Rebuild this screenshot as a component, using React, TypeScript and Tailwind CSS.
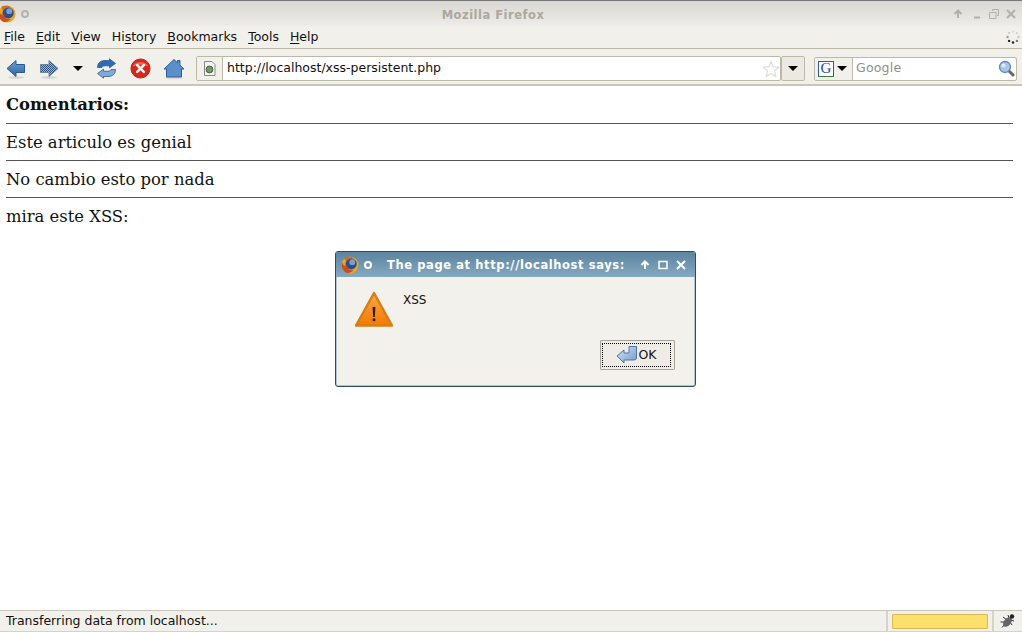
import React from "react";

const Fox = ({ size = 16 }: { size?: number }) => (
  <svg width={size} height={size} viewBox="0 0 16 16" className="shrink-0">
    <circle cx="8" cy="8" r="7.6" fill="#e8a526" />
    <circle cx="9" cy="7" r="5" fill="#2a4f8f" />
    <circle cx="10" cy="5.5" r="2.6" fill="#7f9ecb" />
    <path d="M1 5C1.500 9 4 9 6 8.500C5 11 7 13 11 12.500C9 15.500 4.500 16 2.500 13C.5 11 .2 8 1 5Z" fill="#c9501c" />
    <path d="M3 1.500C5 .5 9 .5 11 1.500C8 1.500 6 3 5 5C4 4 3 3 3 1.500Z" fill="#d86a1c" />
  </svg>
);

const Ring = ({ color }: { color: string }) => (
  <span className={`block h-[8px] w-[8px] shrink-0 rounded-full border-2 ${color}`} />
);

const BackIcon = ({ flip = false, checker = false }: { flip?: boolean; checker?: boolean }) => (
  <svg width="20" height="22" viewBox="0 0 20 22" className={`shrink-0 ${flip ? "-scale-x-100" : ""}`}>
    <defs>
      <linearGradient id="arrowFill" x1="0" y1="0" x2="0" y2="1">
        <stop offset="0" stopColor="#6f9fd0" />
        <stop offset="1" stopColor="#2d62a0" />
      </linearGradient>
      <pattern id="arrowCheck" width="2" height="2" patternUnits="userSpaceOnUse">
        <rect width="2" height="2" fill="#a4b6cc" />
        <rect width="1" height="1" fill="#2f4f7a" />
        <rect x="1" y="1" width="1" height="1" fill="#2f4f7a" />
      </pattern>
    </defs>
    <ellipse cx="10" cy="19.500" rx="8" ry="1.500" fill="#d8d6d0" />
    <path
      d="M1 10.500L10 2.500V6.500H18.500V14.500H10V18.500Z"
      fill={checker ? "url(#arrowCheck)" : "url(#arrowFill)"}
      stroke={checker ? "#6f84a0" : "#2a5a94"}
      strokeWidth="1"
      strokeLinejoin="round"
    />
  </svg>
);

const ReloadIcon = () => (
  <svg width="21" height="21" viewBox="0 0 21 21" className="shrink-0">
    <path d="M1.500 9.500C1.500 4.500 5 2.500 9 2.500H13.500V.8L19.500 5.500L13.500 9.800V7.800H9C7 7.800 6.200 8.500 6 9.500Z" fill="#2f6db0" stroke="#2a5a94" strokeWidth=".8" strokeLinejoin="round" />
    <path d="M19.500 11.500C19.500 16.500 16 18.500 12 18.500H7.500V20.200L1.500 15.500L7.500 11.200V13.200H12C14 13.200 14.800 12.500 15 11.500Z" fill="#7fa9d8" stroke="#2a5a94" strokeWidth=".8" strokeLinejoin="round" />
  </svg>
);

const StopIcon = () => (
  <svg width="21" height="21" viewBox="0 0 22 22" className="shrink-0">
    <circle cx="11" cy="11" r="10" fill="#d8261c" stroke="#b0271d" />
    <path d="M3 9C4 3 18 3 19 9C14 6.500 8 6.500 3 9Z" fill="#ee6a5e" />
    <path d="M7.500 7.500L14.500 14.500M14.500 7.500L7.500 14.500" stroke="#fff" strokeWidth="2.600" strokeLinecap="round" />
  </svg>
);

const HomeIcon = () => (
  <svg width="22" height="22" viewBox="0 0 22 22" className="shrink-0">
    <ellipse cx="11" cy="20" rx="9" ry="1.300" fill="#dedcd6" />
    <path d="M1 11L11 1.500L14.500 4.800V2.500H17V7.200L21 11L18.500 11V19H3.500V11Z" fill="#5a8fca" stroke="#2f5f98" strokeLinejoin="round" />
  </svg>
);

const PageIcon = () => (
  <svg width="13" height="15" viewBox="0 0 13 15">
    <path d="M1.500 .5H9L12 3.500V14.500H1.500Z" fill="#f2f2ee" stroke="#8a8a84" />
    <circle cx="6.500" cy="8.500" r="3.400" fill="#6f9a68" stroke="#44604a" />
  </svg>
);

const Star = () => (
  <svg width="18" height="18" viewBox="0 0 18 18" className="shrink-0">
    <path d="M9 1.500L11.200 6.700L16.800 7.200L12.500 10.900L13.800 16.400L9 13.500L4.200 16.400L5.500 10.900L1.200 7.200L6.800 6.700Z" fill="#fff" stroke="#dcdcd8" strokeWidth="1.200" strokeLinejoin="round" />
  </svg>
);

const Caret = () => (
  <span className="block h-0 w-0 shrink-0 border-x-[5px] border-t-[5px] border-x-transparent border-t-black" />
);

const Magnifier = () => (
  <svg width="17" height="17" viewBox="0 0 17 17" className="shrink-0">
    <path d="M10.500 10.500L15 15" stroke="#66666a" strokeWidth="3" strokeLinecap="round" />
    <circle cx="7" cy="7" r="5.500" fill="#a8c6e8" stroke="#5f86b4" strokeWidth="1.300" />
    <circle cx="5.500" cy="5.500" r="2" fill="#dceafa" />
  </svg>
);

const Spinner = () => (
  <svg width="14" height="14" viewBox="0 0 14 14">
    {[
      [7, 1.500, "#dddddd"],
      [10.900, 3.100, "#d6d6d6"],
      [12.500, 7, "#c8c8c8"],
      [10.900, 10.900, "#777777"],
      [7, 12.500, "#222222"],
      [3.100, 10.900, "#222222"],
      [1.500, 7, "#999999"],
      [3.100, 3.100, "#d0d0d0"],
    ].map(([x, y, c], i) => (
      <circle key={i} cx={x as number} cy={y as number} r="1.200" fill={c as string} />
    ))}
  </svg>
);

const Warning = () => (
  <svg width="40" height="38" viewBox="0 0 40 38" className="shrink-0">
    <defs>
      <linearGradient id="warnFill" x1="0" y1="0" x2="0" y2="1">
        <stop offset="0" stopColor="#f7a84a" />
        <stop offset="1" stopColor="#f57900" />
      </linearGradient>
    </defs>
    <path d="M20 2L38 34.500H2Z" fill="url(#warnFill)" stroke="#d87c14" strokeWidth="2.400" strokeLinejoin="round" />
    <path d="M18.600 16H21.400L20.800 26H19.200Z" fill="#2a1c08" />
    <rect x="18.700" y="27.500" width="2.600" height="2.600" fill="#2a1c08" />
  </svg>
);

const EnterIcon = () => (
  <svg width="22" height="20" viewBox="0 0 22 20" className="shrink-0">
    <defs>
      <linearGradient id="enterFill" x1="0" y1="0" x2="1" y2="1">
        <stop offset="0" stopColor="#dbe7f5" />
        <stop offset="1" stopColor="#6d97c9" />
      </linearGradient>
    </defs>
    <path d="M1 11L8 5V8H13V1.500H20.500V13Q20.500 15 18 15H8V18Z" fill="url(#enterFill)" stroke="#4a76aa" strokeLinejoin="round" />
  </svg>
);

const Bug = () => (
  <svg width="18" height="18" viewBox="0 0 18 18">
    <path d="M4 5L8 8M1.500 10H6M3 15.500L7 11M9 3L10 6M13 13L11 10M15 9L11 8" stroke="#333" strokeWidth="1" />
    <ellipse cx="8.500" cy="10" rx="3.500" ry="5.500" transform="rotate(40 8.500 10)" fill="#666" />
    <circle cx="13" cy="4.500" r="2.200" fill="#222" />
  </svg>
);

const Mnemonic = ({ pre = "", u, post = "" }: { pre?: string; u: string; post?: string }) => (
  <span>
    {pre}
    <span className="underline underline-offset-2">{u}</span>
    {post}
  </span>
);

export default function App() {
  return (
    <div className="relative flex h-[632px] w-[1022px] flex-col overflow-hidden bg-white font-['DejaVu_Sans',sans-serif] text-[12.5px] text-[#101010]">
      <header className="flex h-[26px] shrink-0 items-center border-t border-t-[#777] bg-gradient-to-b from-[#d9d7d2] to-[#eeece8]">
        <div className="flex w-[30px] shrink-0 items-center gap-[5px] overflow-hidden">
          <div className="-ml-[2px]"><Fox size={18} /></div>
          <Ring color="border-[#b5b3ad]" />
        </div>
        <div className="flex-1 pl-[3px] pt-[5px] text-center text-[11.5px] font-bold tracking-[0.5px] text-[#aaa89f]">Mozilla Firefox</div>
        <div className="flex w-[69px] shrink-0 items-center gap-[7px] text-[#b2b0a9]">
          <svg width="10" height="10" viewBox="0 0 10 10"><path d="M5 9V2M1.500 5L5 1.500L8.500 5" fill="none" stroke="currentColor" strokeWidth="2" /></svg>
          <svg width="10" height="10" viewBox="0 0 10 10" className="ml-[2px]"><path d="M2 8.500H8" stroke="currentColor" strokeWidth="2" /></svg>
          <svg width="10" height="10" viewBox="0 0 10 10"><path d="M.5 3.500H7V9.500H.5ZM3.500 2V.5H9.500V6.500H8" fill="none" stroke="currentColor" /></svg>
          <svg width="10" height="10" viewBox="0 0 10 10"><path d="M1 1L9 9M9 1L1 9" stroke="currentColor" strokeWidth="2" /></svg>
        </div>
      </header>

      <nav className="flex h-[23px] shrink-0 items-center justify-between border-b border-b-[#bdb9a9] bg-[#f2f0eb] pl-[4px] pr-[2px]">
        <div className="flex gap-[11px]">
          <Mnemonic u="F" post="ile" />
          <Mnemonic u="E" post="dit" />
          <Mnemonic u="V" post="iew" />
          <Mnemonic pre="Hi" u="s" post="tory" />
          <Mnemonic u="B" post="ookmarks" />
          <Mnemonic u="T" post="ools" />
          <Mnemonic u="H" post="elp" />
        </div>
        <Spinner />
      </nav>

      <div className="flex h-[37px] shrink-0 items-center border-b-2 border-b-[#c9c5b8] bg-[#f2f0eb] pt-[4px]">
        <div className="ml-[6px]"><BackIcon /></div>
        <div className="ml-[13px]"><BackIcon flip checker /></div>
        <div className="ml-[14px]"><Caret /></div>
        <div className="ml-[13px]"><ReloadIcon /></div>
        <div className="ml-[13px]"><StopIcon /></div>
        <div className="ml-[12px]"><HomeIcon /></div>
        <div className="ml-[11px] flex h-[25px] w-[585px] items-center rounded-[2px] border border-[#bdb9a9] bg-white">
          <div className="flex h-full w-[26px] items-center justify-center border-r border-r-[#bdb9a9] bg-[#f2f0eb]"><PageIcon /></div>
          <span className="ml-[4px] flex-1">http://localhost/xss-persistent.php</span>
          <Star />
        </div>
        <div className="flex h-[25px] w-[24px] items-center justify-center rounded-[2px] border border-[#bdb9a9] bg-[#ece9e3]"><Caret /></div>
        <div className="ml-[9px] flex h-[24px] w-[203px] items-center rounded-[2px] border border-[#bdb9a9] bg-white">
          <div className="flex h-full w-[38px] shrink-0 items-center gap-[3px] border-r border-r-[#bdb9a9] bg-[#f2f0eb] pl-[3px]">
            <span className="flex h-[16px] w-[16px] items-center justify-center border border-[#3a7a3a] border-l-[#2a5ab0] border-t-[#2a5ab0] border-r-[#b03030] bg-white font-['Liberation_Serif',serif] text-[15px] leading-none text-[#1f47a8]">G</span>
            <Caret />
          </div>
          <span className="ml-[3px] flex-1 tracking-[0.2px] text-[#8f8f8a]">Google</span>
          <div className="mr-[1px]"><Magnifier /></div>
        </div>
      </div>

      <main className="flex-1 bg-white pl-[6px] pr-[9px] font-['DejaVu_Serif',serif] text-[16.4px] leading-[18px] text-[#111]">
        <p className="pt-[10px] pb-[9px] font-bold">Comentarios:</p>
        <hr className="border-t border-[#555]" />
        <p className="pt-[10px] pb-[8px]">Este articulo es genial</p>
        <hr className="border-t border-[#555]" />
        <p className="pt-[10px] pb-[8px]">No cambio esto por nada</p>
        <hr className="border-t border-[#555]" />
        <p className="pt-[10px] pb-[8px]">mira este XSS:</p>
      </main>

      <footer className="flex h-[22px] shrink-0 items-stretch border-y border-t-[#c9c5b8] border-b-[#d5d2c8] bg-[#f2f0eb]">
        <span className="flex flex-1 items-center pl-[6px]">Transferring data from localhost...</span>
        <div className="flex w-[108px] items-center justify-center border-x-2 border-x-[#d6d3c9]">
          <span className="block h-[15px] w-[96px] rounded-[1px] border border-[#d9bb52] bg-[#fddf6c]" />
        </div>
        <div className="flex w-[28px] items-center justify-center"><Bug /></div>
      </footer>

      <div className="absolute left-[335px] top-[251px] flex h-[136px] w-[361px] flex-col rounded-[3px] border border-[#2f4c63] bg-[#f3f1ec] shadow-[inset_0_0_0_1px_#b5c3cd]">
        <div className="flex h-[25px] shrink-0 items-center rounded-t-[2px] bg-gradient-to-b from-[#5b84a0] to-[#86a9c0] pl-[5px] pr-[9px] text-white">
          <Fox size={18} />
          <span className="ml-[5px] block h-[8px] w-[8px] rounded-full border-2 border-white" />
          <span className="ml-[15px] flex-1 pt-[2px] text-[11.5px] font-bold tracking-[0.6px]">The page at http://localhost says:</span>
          <div className="flex items-center gap-[8px]">
            <svg width="10" height="10" viewBox="0 0 10 10"><path d="M5 9V2M1.500 5L5 1.500L8.500 5" fill="none" stroke="#fff" strokeWidth="2" /></svg>
            <svg width="10" height="10" viewBox="0 0 10 10"><path d="M1 1.500H9V8.500H1Z" fill="none" stroke="#fff" strokeWidth="1.500" /></svg>
            <svg width="10" height="10" viewBox="0 0 10 10"><path d="M1 1L9 9M9 1L1 9" stroke="#fff" strokeWidth="2" /></svg>
          </div>
        </div>
        <div className="flex flex-1 flex-col px-[20px] pt-[14px]">
          <div className="flex">
            <div className="-ml-[2px]"><Warning /></div>
            <span className="ml-[9px] pt-[1px] text-[12px] leading-[16px]">XSS</span>
          </div>
          <div className="mt-[11px] flex justify-end">
            <button className="flex h-[30px] w-[75px] items-center justify-center rounded-[1px] border border-[#a9a59a] bg-[#efece6] pr-[2px]">
              <span className="flex h-[24px] w-[69px] items-center justify-center border border-dotted border-black">
                <EnterIcon />
                <span>OK</span>
              </span>
            </button>
          </div>
        </div>
      </div>
    </div>
  );
}
